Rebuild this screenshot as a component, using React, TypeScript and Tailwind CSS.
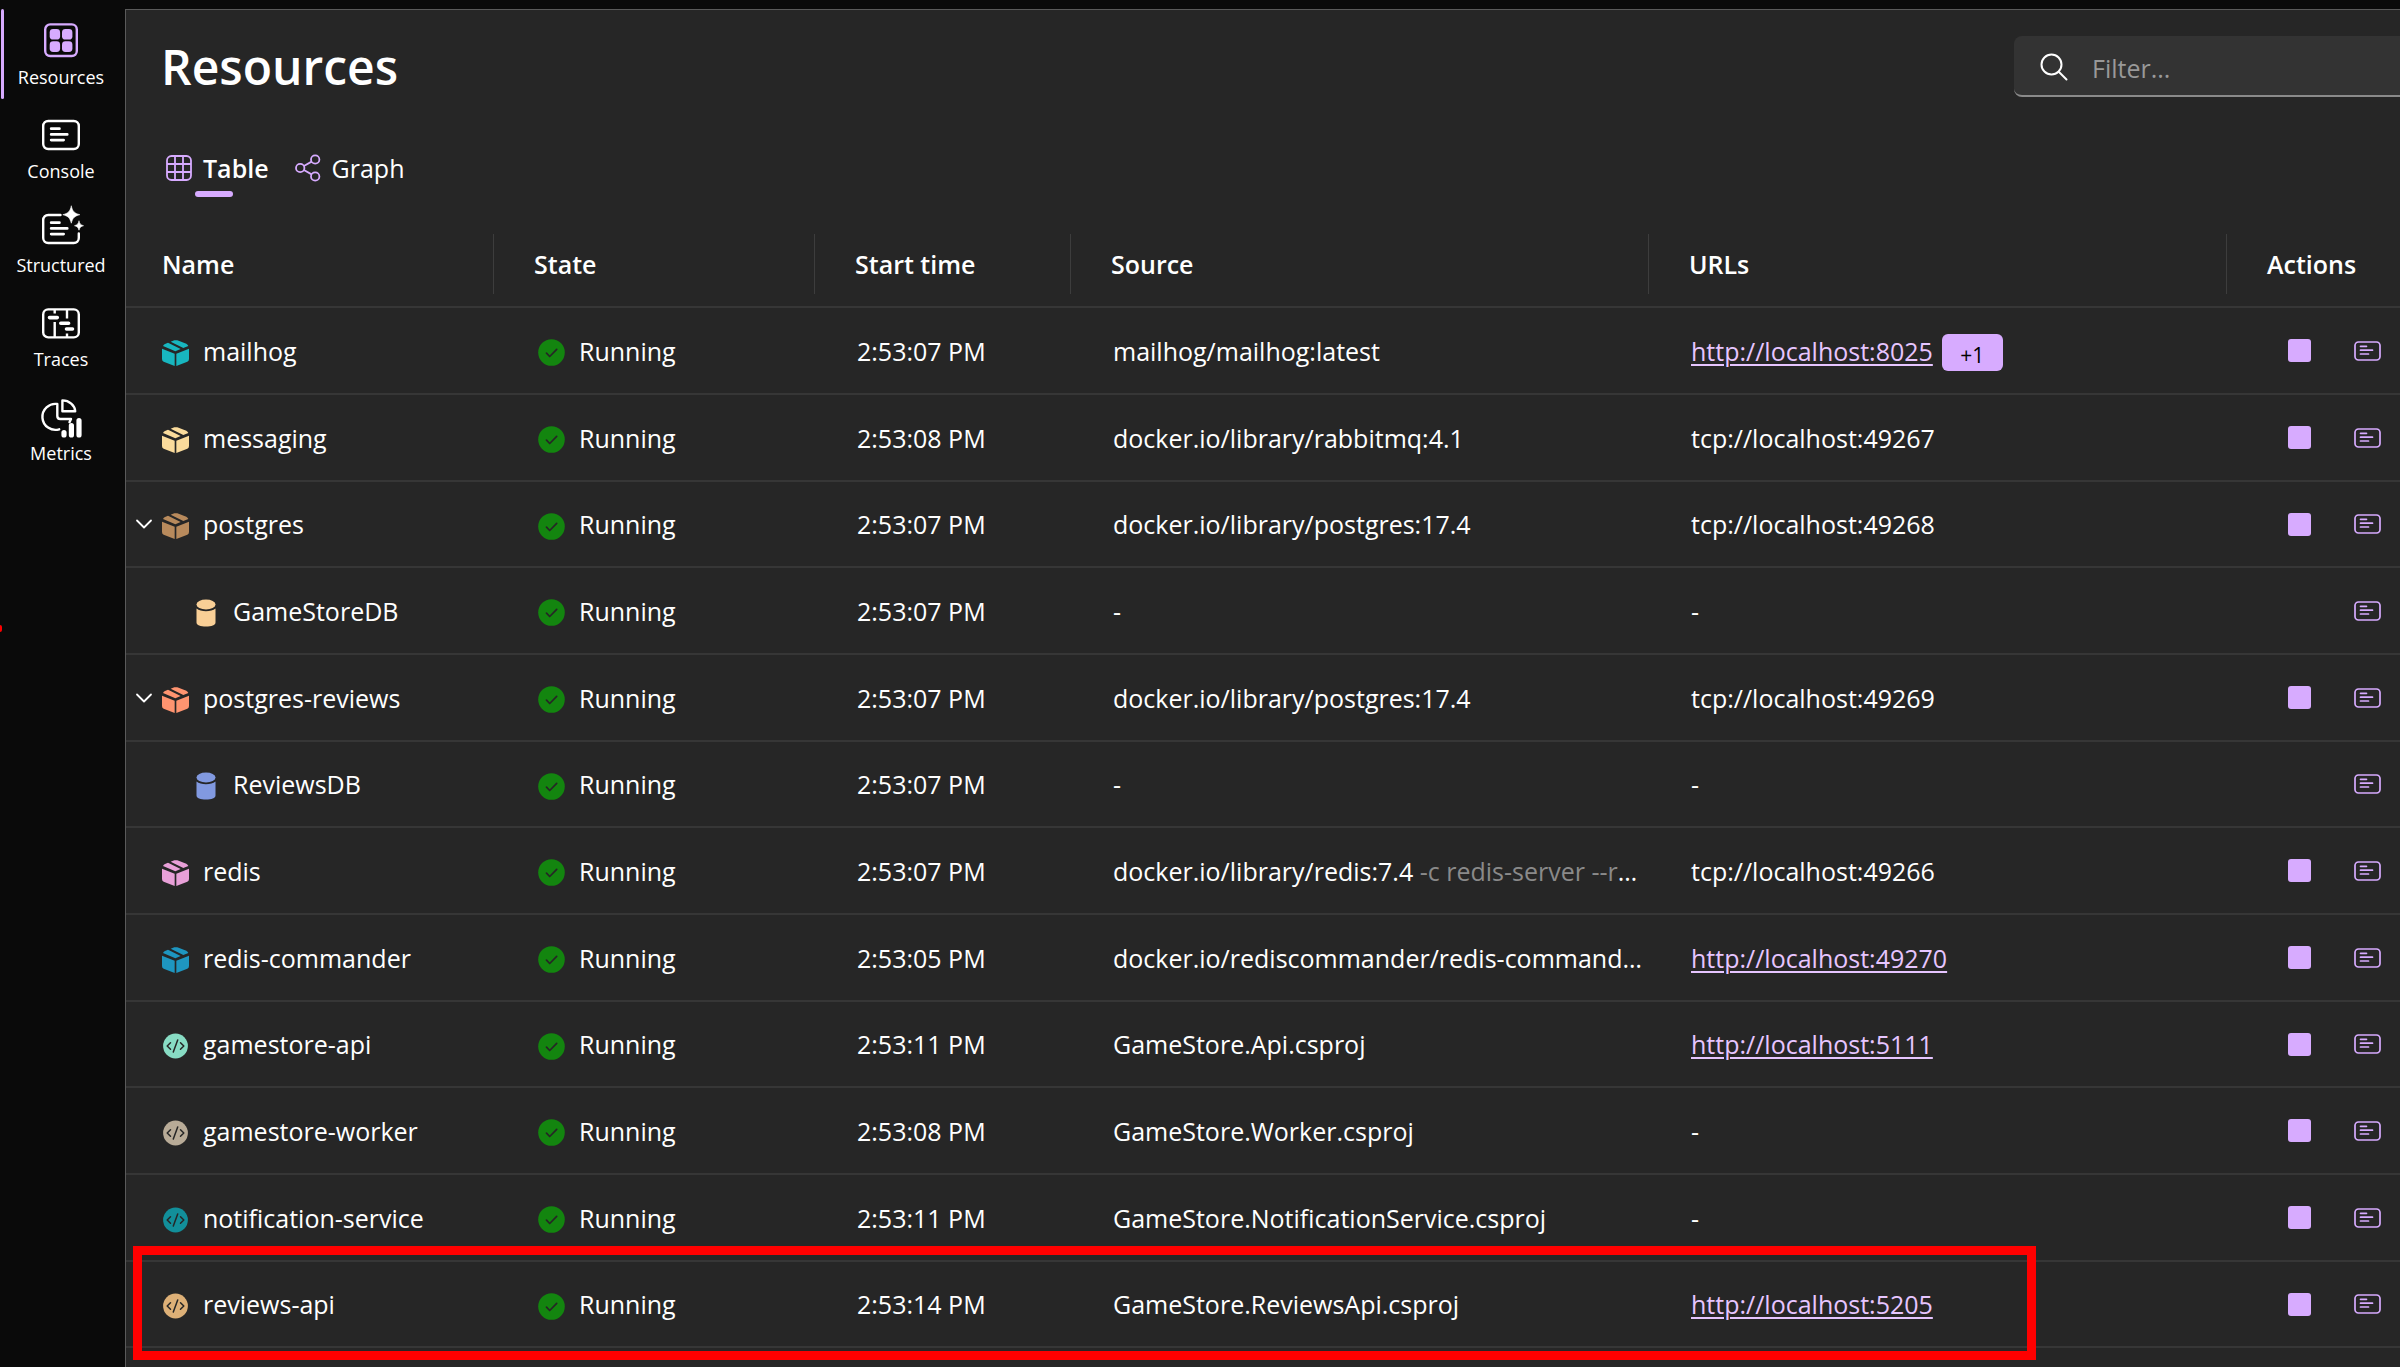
import type { ReactNode } from 'react'
import clsx from 'clsx'

type Kind = 'container' | 'database' | 'project'

type Resource = {
  name: string
  kind: Kind
  color: string
  time: string
  source?: string
  args?: string
  url?: string
  extraUrls?: number
  expandable?: boolean
  highlighted?: boolean
}

const RESOURCES: Resource[] = [
  { name: 'mailhog', kind: 'container', color: 'text-[#18b6bf]', time: '2:53:07 PM', source: 'mailhog/mailhog:latest', url: 'http://localhost:8025', extraUrls: 1 },
  { name: 'messaging', kind: 'container', color: 'text-[#fadb9c]', time: '2:53:08 PM', source: 'docker.io/library/rabbitmq:4.1', url: 'tcp://localhost:49267' },
  { name: 'postgres', kind: 'container', color: 'text-[#b88a5c]', time: '2:53:07 PM', source: 'docker.io/library/postgres:17.4', url: 'tcp://localhost:49268', expandable: true },
  { name: 'GameStoreDB', kind: 'database', color: 'text-[#f9cf96]', time: '2:53:07 PM' },
  { name: 'postgres-reviews', kind: 'container', color: 'text-[#ff9470]', time: '2:53:07 PM', source: 'docker.io/library/postgres:17.4', url: 'tcp://localhost:49269', expandable: true },
  { name: 'ReviewsDB', kind: 'database', color: 'text-[#8199e0]', time: '2:53:07 PM' },
  { name: 'redis', kind: 'container', color: 'text-[#e8a0d8]', time: '2:53:07 PM', source: 'docker.io/library/redis:7.4', args: '-c redis-server --requirepass $REDIS_PASSWORD', url: 'tcp://localhost:49266' },
  { name: 'redis-commander', kind: 'container', color: 'text-[#1e96c0]', time: '2:53:05 PM', source: 'docker.io/rediscommander/redis-commander:latest', url: 'http://localhost:49270' },
  { name: 'gamestore-api', kind: 'project', color: 'text-[#88dcc4]', time: '2:53:11 PM', source: 'GameStore.Api.csproj', url: 'http://localhost:5111' },
  { name: 'gamestore-worker', kind: 'project', color: 'text-[#b8ab97]', time: '2:53:08 PM', source: 'GameStore.Worker.csproj' },
  { name: 'notification-service', kind: 'project', color: 'text-[#128f9a]', time: '2:53:11 PM', source: 'GameStore.NotificationService.csproj' },
  { name: 'reviews-api', kind: 'project', color: 'text-[#ddb077]', time: '2:53:14 PM', source: 'GameStore.ReviewsApi.csproj', url: 'http://localhost:5205', highlighted: true },
]

const COLUMNS = [
  { label: 'Name', width: 'w-[368px]', pad: 'pl-9' },
  { label: 'State', width: 'w-[321px]', pad: 'pl-10' },
  { label: 'Start time', width: 'w-[256px]', pad: 'pl-10' },
  { label: 'Source', width: '', pad: 'pl-10' },
  { label: 'URLs', width: '', pad: 'pl-10' },
  { label: 'Actions', width: 'w-[173px]', pad: 'pl-10' },
]

function NavIcon({ children }: { children: ReactNode }) {
  return (
    <svg viewBox="0 0 44 44" className="size-11 overflow-visible" fill="none" stroke="currentColor" strokeWidth="2.4" strokeLinecap="round" strokeLinejoin="round" aria-hidden="true">
      {children}
    </svg>
  )
}

const NAV_ITEMS = [
  {
    label: 'Resources',
    icon: (
      <NavIcon>
        <rect x="6.2" y="6.4" width="31.6" height="31.6" rx="5" />
        <g fill="currentColor" stroke="none">
          <rect x="10.7" y="11" width="10.4" height="10.6" rx="3.4" />
          <rect x="23" y="11" width="10.4" height="10.6" rx="3.4" />
          <rect x="10.7" y="23.3" width="10.4" height="10.6" rx="3.4" />
          <rect x="23" y="23.3" width="10.4" height="10.6" rx="3.4" />
        </g>
      </NavIcon>
    ),
  },
  {
    label: 'Console',
    icon: (
      <NavIcon>
        <rect x="4.2" y="9" width="35.6" height="28" rx="5" />
        <path d="M12.2 16.7h8.2M12.2 22.4h16M12.2 28.1h12.4" strokeWidth="2.8" />
      </NavIcon>
    ),
  },
  {
    label: 'Structured',
    icon: (
      <NavIcon>
        <path d="M21.5 9H9.2a5 5 0 0 0-5 5v18a5 5 0 0 0 5 5h25.6a5 5 0 0 0 5-5v-4.5" />
        <path d="M12.2 16.7h8.2M12.2 22.4h16M12.2 28.1h12.4" strokeWidth="2.8" />
        <path d="M32.3.2c1.6 5.6 2.900 6.900 8.500 8.500-5.600 1.600-6.900 2.900-8.500 8.500-1.600-5.600-2.900-6.900-8.500-8.500 5.600-1.600 6.900-2.900 8.500-8.500zM40 15.200c.9 2.900 1.600 3.600 4.500 4.500-2.900.9-3.600 1.600-4.500 4.500-.9-2.900-1.600-3.600-4.500-4.500 2.900-.9 3.600-1.600 4.500-4.500z" fill="currentColor" stroke="currentColor" strokeWidth=".6" />
      </NavIcon>
    ),
  },
  {
    label: 'Traces',
    icon: (
      <NavIcon>
        <rect x="4.2" y="9.4" width="35.6" height="28" rx="5" />
        <path d="M15.7 10v3.5M15.7 22v15M28 10v8.5M28 33.5V37" strokeLinecap="butt" />
        <path d="M10.5 17.6h7.8M21.8 23.3h7.8M27.5 29h6" strokeWidth="3.6" />
      </NavIcon>
    ),
  },
  {
    label: 'Metrics',
    icon: (
      <NavIcon>
        <path d="M18.3 10A13 13 0 1 0 20.2 35.3M18.3 10v12q0 3 3 3h10.7l-1.5 3.2" />
        <path d="M23.4 6.4V17.3H36.2A12.8 11.5 0 0 0 23.4 6.4z" />
        <path d="M25 38.5v2.5M32.4 31.5v9.5M40 26.5v14.500" strokeWidth="5.2" />
      </NavIcon>
    ),
  },
]

function BoxIcon() {
  return (
    <svg viewBox="0 0 81 78" className="w-[27px] h-[26px]" fill="currentColor" aria-hidden="true">
      <path d="M0 26 38 41V78L5 65Q0 63 0 57ZM43 41 81 26V57Q81 63 76 65L43 78Z" />
      <path d="M26 5 37 1Q41 0 46 1L73 11Q77 13 79 18L64 24ZM3 18Q5 14 9 12L18 8 56 27 40 34Z" />
    </svg>
  )
}

function DatabaseIcon() {
  return (
    <svg viewBox="0 0 20 28" className="w-5 h-7" fill="currentColor" aria-hidden="true">
      <ellipse cx="10" cy="5.5" rx="9.5" ry="5" />
      <path d="M.5 9.500Q4 12.200 10 12.200T19.500 9.500V23.500C19.500 26 15.500 27.600 10 27.600S.5 26 .5 23.500Z" />
    </svg>
  )
}

function ProjectIcon() {
  return (
    <svg viewBox="0 0 27 26" className="w-[27px] h-[26px]" fill="none" aria-hidden="true">
      <circle cx="13.5" cy="13" r="12.4" fill="currentColor" />
      <path d="M8.500 9.700 5.200 13l3.300 3.300M18.500 9.700l3.300 3.300-3.300 3.300M15.700 7l-4.400 12" stroke="#262626" strokeWidth="1.5" strokeLinecap="round" strokeLinejoin="round" />
    </svg>
  )
}

function RunningIcon() {
  return (
    <svg viewBox="0 0 27 27" className="mt-1 size-[27px]" fill="none" aria-hidden="true">
      <circle cx="13.5" cy="13.5" r="13.3" fill="#13850f" />
      <path d="m8.500 14.200 3.200 3.300 7-7.200" stroke="#262626" strokeWidth="1.7" strokeLinecap="round" strokeLinejoin="round" />
    </svg>
  )
}

function LogsIcon() {
  return (
    <svg viewBox="0 0 27 20" className="w-[27px] h-5" fill="none" stroke="currentColor" strokeWidth="1.7" strokeLinecap="round" aria-hidden="true">
      <rect x="1" y="1" width="25" height="18" rx="3.5" />
      <path d="M6.500 5.300h6M6.500 9.200h12M6.500 13h8" />
    </svg>
  )
}

const KIND_ICON = { container: <BoxIcon />, database: <DatabaseIcon />, project: <ProjectIcon /> }

function UrlCell({ resource }: { resource: Resource }) {
  if (!resource.url) return <>-</>
  if (!resource.url.startsWith('http')) return <>{resource.url}</>
  return (
    <div className="flex items-center gap-[9px]">
      <a href={resource.url} className="text-[#e6c5ff] underline decoration-2 underline-offset-3">
        {resource.url}
      </a>
      {resource.extraUrls && (
        <button className="mt-1 h-[37px] w-[61px] rounded-md bg-[#d7abff] pt-1.5 text-[21px] leading-none text-black">
          +{resource.extraUrls}
        </button>
      )}
    </div>
  )
}

function ResourceRow({ resource }: { resource: Resource }) {
  const isChild = resource.kind === 'database'

  return (
    <tr className="relative h-[87px] nth-[3n]:h-[86px] *:border-b-2 *:border-[#363636]">
      <td>
        <div className={clsx('flex items-center', isChild ? 'pl-[70px]' : 'pl-[9px]')}>
          {!isChild && (
            <div className="w-[27px]">
              {resource.expandable && (
                <button aria-label={`Collapse ${resource.name}`} className="flex w-[18px] h-6 items-center justify-center">
                  <svg viewBox="0 0 18 10" className="w-[18px] h-2.5" fill="none" stroke="currentColor" strokeWidth="1.8" strokeLinecap="round" strokeLinejoin="round">
                    <path d="m2 1.500 7 7 7-7" />
                  </svg>
                </button>
              )}
            </div>
          )}
          <span className={clsx('mt-1', resource.color)}>{KIND_ICON[resource.kind]}</span>
          <span className={isChild ? 'pl-[17px]' : 'pl-[14px]'}>{resource.name}</span>
        </div>
        {resource.highlighted && (
          <span className="pointer-events-none absolute left-[7px] right-[364px] -top-4 -bottom-3 border-[9px] border-[#ff0000]" />
        )}
      </td>
      <td className="pl-11">
        <div className="flex items-center gap-3.5">
          <RunningIcon />
          Running
        </div>
      </td>
      <td className="pl-[42px]">{resource.time}</td>
      <td className="truncate pl-[42px] pr-1">
        {resource.source ?? '-'}
        {resource.args && <span className="text-[#8a8a8a]"> {resource.args}</span>}
      </td>
      <td className="pl-[42px]">
        <UrlCell resource={resource} />
      </td>
      <td>
        <div className="flex items-center justify-end gap-[43px] pr-[19px] text-[#d7abff]">
          {!isChild && (
            <button aria-label={`Stop ${resource.name}`} className="size-[23px] rounded-[3px] bg-[#d7abff]" />
          )}
          <button aria-label={`Console logs for ${resource.name}`}>
            <LogsIcon />
          </button>
        </div>
      </td>
    </tr>
  )
}

export default function App() {
  return (
    <div className="relative flex min-h-screen overflow-hidden bg-[#0a0a0a] pt-[9px] font-['Open_Sans','Noto_Sans',sans-serif] text-[25px] leading-9 text-white">
      <nav className="flex w-[125px] shrink-0 flex-col gap-1">
        {NAV_ITEMS.map((item, i) => (
          <a key={item.label} href="#" className="relative flex h-[90px] flex-col items-center pt-[9px] pr-[3px]">
            {i === 0 && <span className="absolute inset-y-0 left-px w-[3px] rounded-full bg-[#d7abff]" />}
            <span className={i === 0 ? 'text-[#d7abff]' : ''}>{item.icon}</span>
            <span className="mt-[3px] text-[18px] leading-6">{item.label}</span>
          </a>
        ))}
      </nav>
      <span className="absolute left-0 top-[625px] h-[7px] w-0.5 rounded-r-full bg-[#ff0000]" />

      <main className="min-w-0 flex-1 border-t border-l border-[#5a5a5a] bg-[#262626]">
        <header className="flex items-center justify-between pt-[26px] pl-[35px]">
          <h1 className="text-[48px] leading-[58px] font-semibold">Resources</h1>
          <label className="flex h-[61px] w-[386px] items-center gap-6 rounded-l-lg border-b-2 border-[#8a8a8a] bg-[#333333] pl-[26px]">
            <svg viewBox="0 0 28 28" className="mt-0.5 size-7 shrink-0" fill="none" stroke="currentColor" strokeWidth="2" strokeLinecap="round" aria-hidden="true">
              <circle cx="11.5" cy="11.5" r="10" />
              <path d="m19 19 7.500 7.500" />
            </svg>
            <input aria-label="Filter" placeholder="Filter..." className="min-w-0 flex-1 bg-transparent pt-1 outline-none placeholder:text-[#999999]" />
          </label>
        </header>

        <div role="tablist" className="flex gap-[26px] pt-[53px] pl-10">
          <button role="tab" aria-selected="true" className="relative flex h-[47px] gap-[11px] font-semibold">
            <svg viewBox="0 0 26 26" className="mt-[5px] size-[26px] text-[#d7abff]" fill="none" stroke="currentColor" strokeWidth="1.8" aria-hidden="true">
              <rect x="1" y="1" width="24" height="24" rx="4.5" />
              <path d="M1 9h24M1 17h24M9 1v24M17 1v24" />
            </svg>
            Table
            <span className="absolute bottom-0 left-[29px] h-[6px] w-[38px] rounded-full bg-[#d7abff]" />
          </button>
          <button role="tab" aria-selected="false" className="flex h-[47px] gap-[11px]">
            <svg viewBox="0 0 26 28" className="mt-1 w-[26px] h-7 text-[#d7abff]" fill="none" stroke="currentColor" strokeWidth="1.8" aria-hidden="true">
              <circle cx="5.2" cy="14" r="4.2" />
              <circle cx="20.2" cy="5.5" r="4.2" />
              <circle cx="20.2" cy="22.5" r="4.2" />
              <path d="m8.900 12 7.700-4.400M8.900 16l7.700 4.400" />
            </svg>
            Graph
          </button>
        </div>

        <table className="mt-[37px] w-full table-fixed border-separate border-spacing-0 text-left">
          <thead>
            <tr>
              {COLUMNS.map((col) => (
                <th key={col.label} className={clsx('border-b-2 border-[#363636] p-0 pb-3 font-semibold', col.width)}>
                  <div className={clsx('flex h-[60px] items-center', col.pad, col.label !== 'Actions' && 'border-r border-[#3d3d3d]')}>
                    {col.label}
                  </div>
                </th>
              ))}
            </tr>
          </thead>
          <tbody>
            {RESOURCES.map((resource) => (
              <ResourceRow key={resource.name} resource={resource} />
            ))}
          </tbody>
        </table>
      </main>
    </div>
  )
}
